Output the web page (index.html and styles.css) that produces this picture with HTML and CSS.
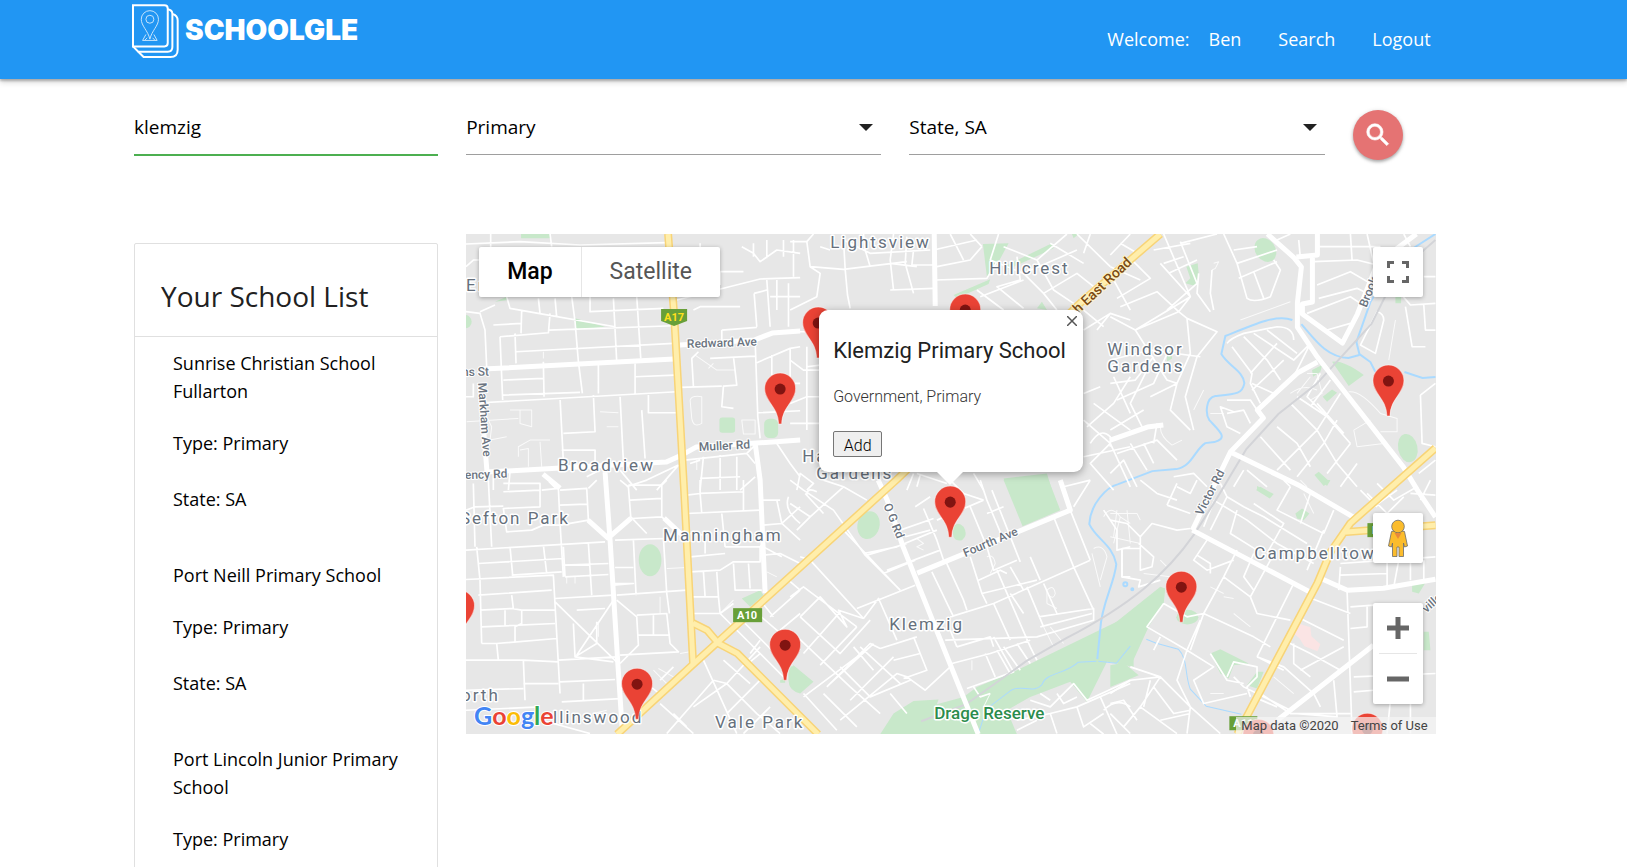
FILE: index.html
```html
<!DOCTYPE html>
<html lang="en">
<head>
<meta charset="utf-8">
<title>Schoolgle</title>
<link rel="stylesheet" href="styles.css">
</head>
<body>
<header class="navbar">
  <div class="container navbar-inner">
    <a class="brand" href="#">
      <svg class="brand-icon" viewBox="0 0 142 166" aria-hidden="true">
        <g fill="none" stroke="#fff" stroke-width="6">
          <path d="M3 4H98Q108 4 108 14V118Q108 128 98 128H3Z"/>
          <path d="M3 128L19 144H108Q122 144 122 130V30Q122 18 108 16"/>
          <path d="M19 144L35 160H116Q138 160 138 138V50Q138 34 122 30"/>
          <g stroke-width="3" opacity=".75">
            <path d="M54 106C48 80 28 66 28 46A26 26 0 0 1 80 46C80 66 60 80 54 106Z"/>
            <circle cx="54" cy="46" r="12"/>
            <path d="M42 92L32 110H76L66 92M46 102L38 110M62 102L70 110"/>
          </g>
        </g>
      </svg>
      <span class="brand-name">SCHOOLGLE</span>
    </a>
    <nav class="nav-links">
      <span class="welcome">Welcome:</span>
      <a href="#">Ben</a>
      <a href="#">Search</a>
      <a href="#">Logout</a>
    </nav>
  </div>
</header>

<main class="container">
  <form class="search-form">
    <input class="field field-text" type="text" value="klemzig" aria-label="School name">
    <div class="select-wrap">
      <select class="field" aria-label="School type"><option>Primary</option><option>Secondary</option></select>
      <svg class="caret" viewBox="0 0 14 8" aria-hidden="true"><path d="M0 0H14L7 7Z"/></svg>
    </div>
    <div class="select-wrap">
      <select class="field" aria-label="State"><option>State, SA</option><option>State, VIC</option></select>
      <svg class="caret" viewBox="0 0 14 8" aria-hidden="true"><path d="M0 0H14L7 7Z"/></svg>
    </div>
    <button class="search-button" type="button" aria-label="Search schools">
      <svg viewBox="0 0 24 24" aria-hidden="true"><path fill="#fff" stroke="#fff" stroke-width=".5" d="M15.500 14h-.79l-.28-.27A6.47 6.47 0 0 0 16 9.500 6.500 6.500 0 1 0 9.500 16c1.610 0 3.090-.59 4.230-1.570l.27.28v.79l5 4.990L20.490 19l-4.990-5zm-6 0C7.010 14 5 11.990 5 9.500S7.010 5 9.500 5 14 7.010 14 9.500 11.990 14 9.500 14z"/></svg>
    </button>
  </form>

  <div class="content">
    <aside class="school-list">
      <h1 class="list-title">Your School List</h1>
      <ul class="schools">
        <li class="school"><p class="school-name">Sunrise Christian School Fullarton</p><p class="school-type">Type: Primary</p><p class="school-state">State: SA</p></li>
        <li class="school"><p class="school-name">Port Neill Primary School</p><p class="school-type">Type: Primary</p><p class="school-state">State: SA</p></li>
        <li class="school"><p class="school-name">Port Lincoln Junior Primary School</p><p class="school-type">Type: Primary</p></li>
      </ul>
    </aside>

    <section class="map" aria-label="School map">
      <svg class="map-canvas" viewBox="0 0 969 500" preserveAspectRatio="xMinYMin slice">
        <defs>
          <g id="pin">
            <path d="M-1.500 0C-2-18-15.500-22-15.500-35.500A15.500 15.500 0 0 1 15.500-35.500C15.500-22 2-18 1.500 0Z" fill="#ea4335" stroke="#fff" stroke-opacity=".5"/>
            <circle cy="-35" r="5.500" fill="#811411"/>
          </g>
        </defs>
        <rect width="1600" height="500" fill="#e7e7e7"/>

        <g class="park">
          <g transform="translate(-6 -4) scale(.33333)"><path d="M183 12H270V25H183ZM105 215L140 200L145 210ZM345 265L435 290L345 300Z"/><circle cx="15" cy="275" r="20"/><rect x="778" y="562" width="47" height="46" rx="8"/><rect x="912" y="566" width="42" height="58" rx="16"/></g>
          <g transform="translate(324 -4) scale(.33333)"><path d="M578 42L655 40L625 95L590 140ZM640 110L785 40L790 55L650 120ZM490 195L600 148L595 162L500 205ZM740 235L755 215L770 240ZM640 745L770 730L785 780H655ZM845 12H865L850 25Z"/></g>
          <g transform="translate(644 -4) scale(.33333)"><ellipse cx="465" cy="60" rx="30" ry="38" transform="rotate(-35 465 60)"/><path d="M228 110L262 100L265 130L255 168L225 160L240 145ZM855 200H872V220H855ZM665 395Q700 390 760 435L715 468ZM605 420L635 405L630 425L608 440ZM637 500L665 478L680 488L650 515ZM612 735L625 725L658 755L640 768ZM440 768L465 780H440ZM170 360L185 350V385L170 395Z"/><ellipse cx="892" cy="654" rx="29" ry="43" transform="rotate(-12 892 654)"/></g>
          <g transform="translate(-6 246) scale(.33333)"><ellipse cx="570" cy="240" rx="34" ry="48"/><path d="M845 355L900 330L910 345L870 380ZM985 570L1000 555L1060 605L1020 640Q985 630 985 600ZM960 600L975 595V608H960Z"/></g>
          <g transform="translate(324 246) scale(.33333)"><ellipse cx="235" cy="135" rx="33" ry="42" transform="rotate(15 235 135)"/><path d="M640 0H775L810 90L697 138ZM488 145Q500 120 520 140Q535 165 515 180Q490 185 488 160ZM0 555L50 600L30 630L0 620ZM270 762L310 700L370 662L445 658L440 672L520 650L560 620L680 570L1030 400V560L950 545L890 665L840 605L720 650L650 690L680 762Z"/></g>
          <g transform="translate(644 246) scale(.33333)"><path d="M0 440L150 320L165 325L160 370L115 440L60 560L40 550L0 540ZM0 555L40 548L85 585L0 620ZM300 520L330 507L415 550L370 555L355 595L330 580ZM410 615L440 575L460 575L440 625ZM555 100L575 85L597 100L580 120L560 115ZM437 30L450 20L490 42L478 55ZM630 0H660L650 18ZM905 312L945 308L925 340L905 335ZM940 455L955 455L960 510H940Z"/><ellipse cx="231" cy="411" rx="33" ry="22"/></g>
        </g>
        <path d="M827 399L831 389L844 393L845 402L854 410L851 417L838 412L833 404Z" fill="#fbe4e4"/>

        <g class="river">
          <path d="M969 0L944 16M910 58L904 68L890 108L893 120L904 128L909 138M938 138L956 144L969 143M835 90C848 105 860 123 882 124L893 121M826 86C810 80 788 90 759 102L755 120C762 132 777 137 778 149C776 160 770 160 749 162C739 164 739 180 743 186C752 196 763 204 748 208L739 209C728 216 726 232 710 235L686 237L652 250C640 253 624 270 623 290C630 305 646 310 650 330C648 350 635 370 634 395L631 425"/>
          <path class="stream" d="M630 427L612 428C600 440 580 438 576 450C568 460 555 450 545 456L520 475L512 500M632 427L650 429L664 412M680 405L690 409L712 415C722 425 718 440 724 455L740 472L775 480"/>
          <circle cx="659" cy="350" r="2"/><circle cx="666" cy="355" r="1"/>
        </g>

        <g class="street">
          <path transform="translate(-6 -4) scale(.33333)" d="M18 42L180 35L360 45L620 38M92 12V60M270 12L275 50M18 110L40 90H60M140 200L150 235L235 250L465 290M185 240L183 310M235 205L240 250M285 205L290 262M335 200L345 275L355 395M390 200V245L610 235M460 205L470 395M530 200L542 385M270 250L265 310M120 320L265 308M120 320L128 510M265 300L640 287M165 310L168 400M168 365L640 340M250 395L252 500M130 450L250 445M18 245L60 250L75 300L80 410M60 245L105 225M100 285L185 280M128 495L360 487M355 395L367 490M415 405V490M525 400V490M525 440L645 435M65 518L650 485M300 505L310 695M400 495L405 605L310 610M480 500L490 695M565 495V548H650M305 660H405V695M545 540L555 685M18 500H40V460M640 65L720 68V40M650 210L900 147L1020 143M640 120H740M730 125H850M780 125V165M700 240L720 230H840M785 300V330M785 300L890 292M845 50L880 70L900 95L950 60L1020 70M880 40V80M920 30V85M970 30V80M1000 30V140M882 190L890 290M882 190L920 180M920 150L930 290M950 150V240M985 160V290M930 200H1020M700 470L695 385L715 365M750 385L885 378M820 380L830 465L790 468L785 530L820 535M660 472L785 468M885 330L893 560L900 625M885 400L990 355L1020 350M935 375V460H1020M990 355V460M895 548L1020 542M675 690L860 670L885 645M730 680L720 780M780 675V780M830 680V780M860 670L885 700M950 640L990 700L1020 740M720 745L840 740M690 700L720 690M500 770L560 750L655 705M590 780L655 705M840 780L885 740M380 740L420 720M480 720L530 780M100 730V780M150 725L145 780"/>
          <path class="lane" transform="translate(-6 -4) scale(.33333)" d="M705 375L770 420H825M745 415L760 400M690 510Q695 495 725 500V580Q700 595 695 565ZM845 570H885V612H850ZM150 540H215V590L180 580V540M20 575L175 565M60 520L95 590L90 630L140 620M175 680V650L210 630H270M240 635L245 710M180 660L205 655V710M420 545L475 548M440 590H475M250 365V385M710 690V720"/>

          <path transform="translate(324 -4) scale(.33333)" d="M0 35H50L70 12M50 35L60 110L90 130L80 200L0 240M60 110L160 118L350 95M160 30L165 118L172 195L180 235M220 12L225 60L240 110M90 50L120 60M310 12L300 90L310 180M300 100L380 110M350 20L345 100L370 190M160 30L240 70L420 60M300 180L430 175M370 60L365 105H430M0 305H60M430 60L560 30M440 110L540 90L575 50M435 150L590 145L620 95M480 12L520 90M540 12L575 50M625 12L600 90L700 130L760 190L800 240M640 50L740 90L830 12M680 80L690 150L620 170L700 235M700 130L860 60M740 90L790 180L850 220M760 190L860 130L910 170M780 40L880 100M860 12L960 110M560 180L640 240M570 200L700 150M900 12L880 70M0 390L40 420H90M50 350V600M0 520L50 500H90M0 580H90M50 410L90 405M880 300L960 250L1020 270M960 250L920 300M880 240L940 290M970 150L1020 240M1020 440L970 520L890 590M880 570L960 640L1020 770M960 640L900 700L970 780M900 640Q930 590 960 620V650M880 680L1020 650M910 520L1020 600M880 490L930 470M970 440L1020 550M20 780L30 730L70 760L50 780M350 780L370 730M380 730L470 760M390 735L380 770M550 730L580 780"/>

          <path transform="translate(644 -4) scale(.33333)" d="M0 110L90 150M0 75L60 12M60 85L120 145L20 205M0 260L75 300L240 200L150 100M30 40L90 75M160 12L240 200L205 245L140 185L30 230M75 300L205 245L230 265L320 305L260 380L225 500L250 600M210 40L320 12M130 60L240 40M210 35L260 160L170 240M160 100L220 80M175 130L260 90M265 130L260 190L300 245M305 120L300 190L310 240M340 12L380 100L410 205Q430 220 480 200L510 120L490 90M380 100L500 60M430 125L460 205M385 145L500 95M370 60L440 50M500 30L540 12M565 30L570 85M610 95L740 90L800 105M720 12L725 90M770 12L790 100M620 50H810M620 165L720 125L780 160M625 205L740 175L770 190M590 250L720 200L750 220M650 300L720 280M880 12L900 50M975 220L900 225L870 190M940 225L945 300H975M885 230L905 350H945M800 245Q820 250 820 270L795 370L750 345ZM940 140H975M350 340Q360 325 400 310L500 290Q550 290 550 330M400 320L470 390L510 450M430 310L550 390L600 340M470 300L560 370M365 350L425 430L420 460L450 520M420 430L500 340M425 480L520 390M550 440L600 340M425 460L490 490M370 545L330 530L350 590L390 610M350 510H420L440 540M350 550L400 540L420 580M0 390L120 360L270 380M0 460L75 450L130 380M20 510L130 460L180 350M75 300L170 450L200 460L240 370L230 265M120 500L200 460M200 460L180 540L240 600M110 420L60 520L100 600M0 600L100 540M930 495L975 460M930 495L935 640L975 650M500 590L560 640L600 710M450 620L540 720M540 520L620 600L680 700L740 770M620 520L700 610M560 500L650 560L720 640M680 570L640 640L560 740M720 640L650 730M630 430L590 500L690 600M660 450L600 530M690 490L620 600L500 720M740 700L690 770M190 740L250 730L290 770M400 720L370 770M410 720L470 770M130 640L140 580M0 730L40 690L80 770M60 640L110 720M100 640L130 700M20 670L140 630L200 690M925 730L975 690"/>
          <path class="lane" transform="translate(644 -4) scale(.33333)" d="M390 270L540 215M150 590Q150 620 185 645L215 630M310 100L325 95L315 115L305 120M835 390L855 270M715 485Q750 480 810 550L860 565V605H810M730 600L780 570M730 600L740 650L820 640M540 490Q580 460 620 480M560 490L600 440M590 430L620 430L635 490L600 510M570 750L590 770M300 550L340 550M280 480L250 540"/>

          <path transform="translate(-6 246) scale(.33333)" d="M18 90L45 80L130 78M40 10L45 200M85 0L95 200M130 10H240V80L130 85L140 155L215 150L250 135H300M130 35L240 30M245 30L295 25L300 130L310 290M300 75L380 72M300 30L380 25L385 120L300 135M385 25L410 0M480 0L505 20L512 110L560 160M505 15H605L620 0M605 15V110L515 115M510 60L605 55M660 160L605 110M18 210L435 185M50 200L60 300L65 490M150 200L158 285M55 250L310 235M250 195L260 280M155 285L305 275M310 200L315 290M385 190L395 345M310 255L445 250M315 290L445 283M465 180L610 175L620 340M520 180L528 345M18 298L280 285L300 640M55 345L275 330M60 390L155 385L185 390H285M155 345L160 385M135 390V435M185 390V430L165 440V485M65 440L285 430M65 490H110L290 475M18 540L190 540L295 545M110 490L115 540M190 540L195 660M190 610L295 610M295 540L470 530M18 630L190 625M285 355L460 345M285 365L475 550M350 390L435 385M340 430L345 530L410 490V425M350 525L460 360M345 530L460 545M470 360L530 410L535 495L480 550M530 405L620 400L630 490L655 515L480 525M580 405V465M535 465H630M470 345L680 330M620 340L628 400M460 310H520L460 315M465 262H520M300 605L465 598M305 665L480 655M370 610V665M18 690L240 680M245 720L390 760M680 45L720 40L725 100M720 0V40M680 100L900 90M785 100L795 200M720 40L850 35M850 0V90M680 160L735 165M735 165V220M690 230L795 220M795 200H900V245H820L780 270L690 275M730 275L735 350M690 350H775L780 400M690 400H780M770 275L775 350M820 250L825 330H905M865 250L870 325M900 60H960M910 135L965 130L1020 80M900 195L965 230M910 225L960 220L1020 250M950 60L965 130L1020 180M985 50Q970 90 1020 130M820 370L780 400L970 590M855 430L985 560M870 520L900 480M880 390L1020 510M930 410L1020 330M960 450L1020 400M900 360L940 410M985 300L1020 330M870 545L900 520M700 680L800 610L900 500M620 760L760 600M730 540L830 760M760 600L800 610L890 700L960 760M600 670L700 760M600 600L640 560M560 610L610 650M680 740L640 700M800 700L900 600M850 760L930 680M790 540L870 610"/>
          <path class="lane" transform="translate(-6 246) scale(.33333)" d="M320 290V310M345 290V310M595 565L640 590M580 570L620 610M690 515L660 520M620 265L680 262M600 350V400M780 400L820 360M415 430V470M400 700L440 690M920 275L950 290"/>

          <path transform="translate(324 246) scale(.33333)" d="M0 0L40 30L130 90L225 225L330 330M0 70L60 110L160 20L230 60M45 40L100 100M60 110L20 150M100 0L160 20M50 45Q50 20 80 35M30 230L60 240L220 415M160 150L325 325M230 225L350 190M220 220L320 200L440 150M280 280L375 240M200 385L375 315M220 415L265 355L320 480M0 350L40 320L200 440M30 410L90 350L170 440L145 390L220 415M30 410L150 520L240 420M0 450L180 620L270 700M40 520L150 395M90 555L200 440M40 650L240 500M120 610L250 490M150 720L320 580L350 590L405 630L480 560M180 660L310 530M270 505L380 470M270 505L240 490L110 620M370 470L390 520L410 570L340 595M310 540L390 520M190 500L250 570M150 560L240 650L360 600M210 500L330 610M40 640L140 750M100 640L200 740M300 640L350 700M375 80L420 50M330 150L430 115M400 85L440 180L460 240M345 170L420 150M290 270L450 210M440 120L580 60M540 80L590 200L610 270L680 240M480 0L520 40L580 60M570 0L590 60L640 180M590 100L640 80M605 30L690 245M465 240L520 360L530 390M425 275L490 410M540 230L575 340L740 300M565 300L630 270L650 280M480 410L610 370L900 240M575 340L590 370M620 270L720 500L740 540M660 260L700 330M710 320L760 440M720 230L750 300M760 310L800 400M790 110L850 260L910 390M840 90L900 240M660 340L700 400M745 410L910 385V420L740 470L465 480M610 370L660 480M750 440L905 400M500 500L600 470L610 500M500 500L480 450M485 550L600 520L720 480M530 625L670 575L610 470M585 520L615 590M620 510L660 580M640 500L690 570M680 490L720 550M820 20L900 0M900 0L850 80M940 90L980 150V210L1020 200M995 205V290H1020M550 620L570 650L600 640M720 660L780 680L850 610L890 660L1020 600M780 660L750 640M800 640L820 670L860 650M680 720L780 700L800 760M780 700L860 680L880 740L940 700M860 680L1020 610M930 650L980 762M940 690Q980 650 1020 680M680 750L740 720M900 730L940 762"/>
          <path class="lane" transform="translate(324 246) scale(.33333)" d="M770 370V330Q790 310 795 340Q790 360 775 345M770 370L800 385M380 175L400 190L380 200L400 210M545 540V570M590 230Q610 220 615 250L600 280M910 205Q940 190 950 230L930 300M905 220L930 320M940 110Q960 70 990 110L1020 130M970 190L990 110M600 640L580 680M760 440L790 500M780 440L820 490"/>

          <path transform="translate(644 246) scale(.33333)" d="M0 120L50 130L90 170L125 130L200 150L240 145M90 170V270L125 260L130 230L85 190M35 205H90M35 205V290L90 300L85 320L150 300M170 75L200 10M170 75L240 100M200 20L240 40L260 0M90 0L140 40L200 60M290 180L250 240L290 270L370 240M260 225L300 250V280M330 10L350 50L400 80L460 110L590 190M310 60L410 120L500 190L610 250M310 65L280 140M350 50L300 150M380 90L360 160L440 210M430 70L520 130L470 220M540 20L500 90L640 160M540 20L520 0M640 160L670 90M600 40L570 130M640 150L590 270M380 210L340 290L280 400L240 510M280 400L430 470L480 500M340 290L420 350L440 400L540 420M430 220L400 290L430 330M480 240L420 350M550 310L440 530M590 350L720 400M560 410L700 480M520 480L600 520L690 570M440 530L520 560L610 640M550 490V550L600 590M710 330L725 760M690 260L685 330M690 250L830 240V320M690 285L830 280M840 240L975 230M865 240L850 320M900 210V300M940 240V300M720 380L790 375M770 380V440L720 445M670 600L680 710L560 700M610 640L630 680M570 570L700 500M730 590L975 580M730 635L790 630M840 660L830 760M900 660V760M750 30L800 80M720 130L860 30M770 40L830 100L880 50M800 10L850 60L920 20M900 40L975 45M960 0L930 60M160 370L230 410L280 400M160 370L110 440L230 510L270 420M150 470L130 510M230 510L200 600L240 680L230 760M230 510L310 560L250 600L280 670L410 640M60 560L150 590L240 680M0 640L60 600L150 590L90 680L40 740M90 680L200 760M0 670L40 660L80 720M130 620L190 700L240 690M350 590L370 545L440 560V590L410 620L420 650M370 590L400 620L440 640L540 690M440 530L520 570M450 640L540 700H720M430 650L500 680M120 600L100 680M150 720L240 700M240 680L330 760M0 700L60 760M300 520L350 600L400 610"/>
          <path class="lane" transform="translate(644 246) scale(.33333)" d="M0 100L80 100L90 120M0 170L90 190M20 90L10 170M50 90L60 190M340 350L370 355M300 320L340 340M370 400L420 440M150 240L170 260M100 280L180 290M340 640L300 640M580 40L610 100M490 590L550 640"/>
        </g>

        <g class="rail"><path d="M969 6L930 40L905 90L850 150L812 180L780 215L750 265L728 300C700 340 665 370 600 404L560 427L500 470L455 487"/></g>

        <g class="avenue">
          <path d="M17 135L208 125M14 150L21 238L200 228Q215 222 230 213L334 206M214 111L288 106L306 99L334 97M139 238L144 306L152 433L156 493M289 209L294 246L299 359M84 246L91 253M122 286L142 304L165 284M198 284L215 300M77 240L94 254M468 0L469 72M412 246L421 266L437 313L512 500M451 339L604 276L594 246M801 0L827 23L835 33L831 69L831 93L851 123L937 233L951 256L969 283M851 128L831 139L791 176L797 184L764 218L726 296M764 218L834 252L887 283M726 296L844 358M854 344L881 356L917 354L969 345M811 486L907 411M830 23L851 21V0M846 23V68L836 70V80L876 109L891 80L911 29L950 0M644 206L681 193L697 191"/>
        </g>

        <g class="highway-edge"><path d="M202 0L208 80L218 256L227 430M151 500L225 432L430 246L614 69L694 0M227 389L241 396L252 409L271 419L331 479L352 500M969 214L884 289L864 318L851 349L771 500M877 298L969 291"/></g>
        <g class="highway"><path d="M202 0L208 80L218 256L227 430M151 500L225 432L430 246L614 69L694 0M227 389L241 396L252 409L271 419L331 479L352 500M969 214L884 289L864 318L851 349L771 500M877 298L969 291"/></g>

        <g class="shield">
          <path d="M195 75H221V87L208 92L195 87Z"/><rect x="267" y="374" width="29" height="14"/><rect x="763" y="482" width="28" height="14"/><rect x="901" y="289" width="28" height="14"/>
          <text class="shield-old" x="208" y="87">A17</text><text x="281" y="385">A10</text><text x="777" y="493">A11</text><text x="909" y="300">B</text>
        </g>

        <g class="place">
          <text x="0" y="57">Er</text>
          <text x="364" y="14">Lightsview</text>
          <text x="523" y="40">Hillcrest</text>
          <text x="641" y="121">Windsor</text><text x="641" y="138">Gardens</text>
          <text x="92" y="237">Broadview</text>
          <text x="336" y="228">Hampstead</text><text x="350" y="245">Gardens</text>
          <text x="-6" y="290">Sefton Park</text>
          <text x="197" y="307">Manningham</text>
          <text x="423" y="396">Klemzig</text>
          <text x="788" y="325">Campbelltown</text>
          <text x="-5" y="467">orth</text>
          <text x="87" y="489">llinswood</text>
          <text x="249" y="494">Vale Park</text>
        </g>
        <g class="road-name">
          <text transform="translate(221 114) rotate(-2)">Redward Ave</text>
          <text transform="translate(233 217) rotate(-3)">Muller Rd</text>
          <text transform="translate(-4 142) rotate(-1)">ns St</text>
          <text transform="translate(-1 245) rotate(-2)">ency Rd</text>
          <text transform="translate(12 149) rotate(86)">Markham Ave</text>
          <text transform="translate(417 271) rotate(68)">O G Rd</text>
          <text transform="translate(499 323) rotate(-23)">Fourth Ave</text>
          <text transform="translate(736 282) rotate(-63)">Victor Rd</text>
          <text transform="translate(900 74) rotate(-68)">Brook</text>
          <text transform="translate(960 379) rotate(-42)">ville</text>
          <text class="main-road" transform="translate(612 80) rotate(-43)">h East Road</text>
        </g>
        <text class="reserve" x="468" y="485">Drage Reserve</text>

        <use href="#pin" x="352" y="124"/><use href="#pin" x="499" y="111"/><use href="#pin" x="314" y="190"/><use href="#pin" x="922" y="182"/><use href="#pin" x="-7" y="407"/><use href="#pin" x="171" y="485"/><use href="#pin" x="319" y="446"/><use href="#pin" x="484" y="303"/><use href="#pin" x="715" y="388"/><use href="#pin" x="792" y="536"/><use href="#pin" x="901" y="530"/>
        <text class="google" x="8" y="491"><tspan fill="#4285f4">G</tspan><tspan fill="#ea4335">o</tspan><tspan fill="#fbbc05">o</tspan><tspan fill="#4285f4">g</tspan><tspan fill="#34a853">l</tspan><tspan fill="#ea4335">e</tspan></text>
      </svg>

      <div class="map-types">
        <button class="map-type map-type-active" type="button">Map</button>
        <button class="map-type" type="button">Satellite</button>
      </div>

      <div class="map-tools">
        <button class="tool" type="button" aria-label="Full screen"><svg viewBox="0 0 22 22" width="22" height="22"><path d="M1.500 7V1.500H7M15 1.500H20.500V7M20.500 15V20.500H15M7 20.500H1.500V15" fill="none" stroke="#666" stroke-width="3"/></svg></button>
        <div class="tool-group">
          <button class="tool" type="button" aria-label="Street View"><svg viewBox="0 0 22 38" width="22" height="38"><g fill="#fbbc2c" stroke="#6b6b6b" stroke-width=".8"><path d="M4.500 12.500Q11 10 17.500 12.500L20.500 27L17.500 28L16.500 24V37.500H12V28H10V37.500H5.500V24L4.500 28L1.500 27Z"/><circle cx="11" cy="7.500" r="6.300"/></g><path d="M7.500 14H14.500L11 20Z" fill="#e8893b"/></svg></button>
          <div class="zoom">
            <button class="tool-zoom" type="button" aria-label="Zoom in"><svg viewBox="0 0 22 22" width="22" height="22"><path d="M8.500 0H13.500V8.500H22V13.500H13.500V22H8.500V13.500H0V8.500H8.500Z" fill="#666"/></svg></button>
            <button class="tool-zoom" type="button" aria-label="Zoom out"><svg viewBox="0 0 22 22" width="22" height="22"><path d="M0 8.500H22V13.500H0Z" fill="#666"/></svg></button>
          </div>
        </div>
      </div>

      <div class="map-legal"><span>Map data ©2020</span><a href="#">Terms of Use</a></div>

      <div class="popup">
        <button class="popup-close" type="button" aria-label="Close"><svg viewBox="0 0 10 10" width="10" height="10"><path d="M0 0L10 10M10 0L0 10" stroke="#555" stroke-width="1.500"/></svg></button>
        <h2 class="popup-title">Klemzig Primary School</h2>
        <p class="popup-text">Government, Primary</p>
        <button class="popup-add" type="button">Add</button>
      </div>
    </section>
  </div>
</main>
</body>
</html>
```

FILE: styles.css
```css
* { box-sizing: border-box; }

body {
  margin: 0;
  height: 100vh;
  overflow: hidden;
  background: #fff;
  color: #000;
  font-family: "Open Sans", "Noto Sans", sans-serif;
  font-size: 18px;
  line-height: 28px;
}

p, h1, h2, ul { margin: 0; padding: 0; font-weight: 400; }
button, input, select { font: inherit; color: inherit; }
button { padding: 0; border: 0; cursor: pointer; }
svg { display: block; }

.container { width: 80%; margin-left: 134px; }

.navbar {
  height: 79px;
  background: #2196f3;
  color: #fff;
  box-shadow: 0 2px 2px rgba(0, 0, 0, .22), 0 3px 6px rgba(0, 0, 0, .18);
}
.navbar-inner { display: flex; justify-content: space-between; }
.brand { display: flex; gap: 6px; padding-top: 4px; color: inherit; text-decoration: none; }
.brand-icon { width: 47px; height: 55px; margin-left: -2px; }
.brand-name { padding-top: 12px; font-family: Inter, sans-serif; font-weight: 900; font-size: 28px; }
.nav-links { display: flex; gap: 37px; padding: 25px 5px 0 0; }
.nav-links a { color: inherit; text-decoration: none; }
.welcome { margin-right: -18px; }

.search-form {
  display: grid;
  grid-template-columns: 304fr 415fr 415fr 83fr;
  gap: 28px;
  padding-top: 21px;
}
.field {
  width: 100%;
  height: 55px;
  padding: 0 0 1px;
  border: 0;
  border-bottom: 1px solid #9e9e9e;
  border-radius: 0;
  outline: 0;
  background: transparent;
  font-size: 19px;
  appearance: none;
}
.field-text { height: 56px; border-bottom: 2px solid #4caf50; }
.select-wrap { position: relative; }
.caret { position: absolute; right: 8px; top: 24px; width: 14px; height: 8px; fill: #212121; pointer-events: none; }
.search-button {
  display: grid;
  place-items: center;
  width: 50px;
  height: 50px;
  margin-top: 10px;
  border-radius: 50%;
  background: #e57373;
  box-shadow: 0 2px 3px rgba(0, 0, 0, .25), 0 1px 5px rgba(0, 0, 0, .15);
}
.search-button svg { width: 30px; height: 30px; }

.content {
  display: grid;
  grid-template-columns: 304fr 969fr;
  gap: 28px;
  align-items: start;
  padding-top: 74px;
}

.school-list { margin-top: 9px; border: 1px solid #e0e0e0; border-radius: 2px; }
.list-title {
  padding: 38px 26px 26px;
  border-bottom: 1px solid #e0e0e0;
  color: #212121;
  font-size: 28px;
}
.schools { padding: 12px 30px 12px 38px; list-style: none; }
.school { margin-bottom: 48px; }
.school-name { margin-bottom: 24px; }
.school-type { margin-bottom: 28px; }

.map { position: relative; height: 500px; overflow: hidden; font-family: Roboto, sans-serif; }
.map-canvas { width: 100%; height: 100%; }
.park { fill: #c8e8ca; }
.river { fill: none; stroke: #aadaff; stroke-width: 2; }
.stream { stroke-width: 1; }
.street { fill: none; stroke: #fff; stroke-width: 5; stroke-linejoin: round; }
.lane { stroke-width: 3; stroke-opacity: .8; }
.rail { fill: none; stroke: #d3d4d8; stroke-width: 2; }
.avenue { fill: none; stroke: #fff; stroke-width: 5; stroke-linejoin: round; }
.highway-edge { fill: none; stroke: #f8d477; stroke-width: 8; stroke-linejoin: round; }
.highway { fill: none; stroke: #ffeeab; stroke-width: 5; stroke-linejoin: round; }
.shield { fill: #689f38; font-size: 11px; font-weight: 700; text-anchor: middle; }
.shield text { fill: #fff; }
.shield .shield-old { fill: #ffe01b; }
.place, .road-name, .reserve { paint-order: stroke; stroke: #fff; stroke-width: 3; stroke-linejoin: round; }
.place { fill: #66707c; font-size: 17px; letter-spacing: 2px; }
.road-name { fill: #6b7480; stroke-width: 2; font-size: 12px; font-weight: 500; }
.main-road { fill: #7b4a12; stroke: #fff3c4; font-size: 14px; }
.reserve { fill: #2b8c4c; font-size: 17px; font-weight: 500; }
.google { paint-order: stroke; stroke: #fff; stroke-width: 2; font-family: Lato, sans-serif; font-size: 25px; font-weight: 700; }

.map-types {
  position: absolute;
  left: 13px;
  top: 13px;
  display: flex;
  height: 50px;
  border-radius: 2px;
  background: #fff;
  box-shadow: 0 1px 4px rgba(0, 0, 0, .3);
}
.map-type { padding: 0 28px; background: transparent; color: #565656; font-size: 23px; }
.map-type + .map-type { border-left: 1px solid #e6e6e6; }
.map-type-active { color: #000; font-weight: 500; }

.map-tools {
  position: absolute;
  top: 13px;
  right: 13px;
  bottom: 30px;
  display: flex;
  flex-direction: column;
  justify-content: space-between;
}
.tool-group { display: grid; gap: 40px; }
.tool, .zoom { width: 50px; border-radius: 2px; background: #fff; box-shadow: 0 1px 4px rgba(0, 0, 0, .3); }
.tool { display: grid; place-items: center; height: 50px; }
.zoom { display: grid; padding: 0 6px; }
.tool-zoom { display: grid; place-items: center; height: 50px; background: transparent; }
.tool-zoom + .tool-zoom { height: 51px; border-top: 1px solid #e6e6e6; }

.map-legal {
  position: absolute;
  right: 0;
  bottom: 0;
  display: flex;
  gap: 12px;
  padding: 0 8px 0 5px;
  background: rgba(245, 245, 245, .7);
  color: #444;
  font-size: 13px;
  line-height: 17px;
}
.map-legal a { color: inherit; text-decoration: none; }

.popup {
  position: absolute;
  left: 353px;
  top: 76px;
  width: 264px;
  padding: 27px 15px 15px 14px;
  border-radius: 9px;
  background: #fff;
  box-shadow: 0 2px 8px rgba(0, 0, 0, .35);
}
.popup::after {
  content: "";
  position: absolute;
  left: 118px;
  top: 100%;
  border: 13px solid transparent;
  border-top-color: #fff;
  border-bottom: 0;
}
.popup-close { position: absolute; right: 6px; top: 6px; background: transparent; }
.popup-title { color: #212121; font-size: 22px; }
.popup-text { margin: 18px 0 20px; color: #333; font-size: 16px; font-weight: 300; }
.popup-add {
  display: block;
  width: 49px;
  height: 26px;
  border: 1px solid #767676;
  border-radius: 2px;
  background: #efefef;
  font-size: 16px;
  font-weight: 300;
}
```
